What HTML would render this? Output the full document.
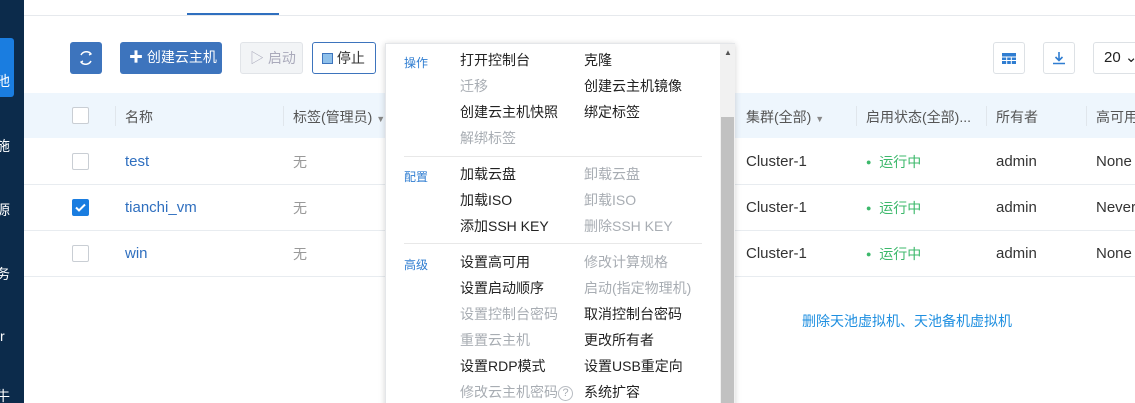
<!DOCTYPE html>
<html><head><meta charset="utf-8"><style>
*{margin:0;padding:0;box-sizing:border-box}
html,body{width:1135px;height:403px;overflow:hidden}
body{background:#fff;font-family:"Liberation Sans","Noto Sans CJK SC",sans-serif;font-size:14px;color:#333;position:relative}
.a{position:absolute;white-space:nowrap}
.side{left:0;top:0;width:24px;height:403px;background:#0c2b4b}
.side span{position:absolute;left:-4px;color:#fff;font-size:14px}
.btn{position:absolute;height:32px;border-radius:3px;line-height:30px;font-size:14px}
.hd{top:93px;left:24px;width:1111px;height:45px;background:#eef6fd}
.row{left:24px;width:1111px;height:1px;background:#e8ecf0}
.cb{position:absolute;left:72px;width:17px;height:17px;border:1px solid #c9ced4;border-radius:2px;background:#fff}
.menu{left:385px;top:43px;width:350px;height:370px;background:#fff;box-shadow:0 1px 6px rgba(0,0,0,.18);border:1px solid #e4e6e9}
.m{position:absolute;font-size:14px;color:#222}
.d{color:#a8adb3}
.g{position:absolute;left:18px;font-size:12px;color:#2f7dd1}
.sep{position:absolute;left:18px;width:298px;height:1px;background:#e8e8e8}
.rt{font-size:15px;line-height:18px}
</style></head><body>
<div class="a side">
<div style="position:absolute;left:0;top:38px;width:14px;height:59px;background:#1a7de0;border-radius:0 3px 3px 0"></div>
<span style="top:71px">池</span><span style="top:136px">施</span><span style="top:200px">源</span><span style="top:264px">务</span><span style="top:328px;left:0">r</span><span style="top:386px">牛</span>
</div>
<div class="a" style="left:24px;top:15px;width:1111px;height:1px;background:#e6e9ed"></div>
<div class="a" style="left:187px;top:13px;width:92px;height:2px;background:#2f6fbf"></div>

<div class="btn" style="left:70px;top:42px;width:32px;background:#3d74bd;text-align:center"><svg width="18" height="18" viewBox="0 0 18 18" style="margin-top:7px"><path d="M4 6A6 6 0 0 1 14 5M14 12A6 6 0 0 1 4 13" stroke="#fff" stroke-width="1.5" fill="none"/><path d="M12 3l2 2-2 1M6 15l-2-2 2-1" stroke="#fff" stroke-width="1.3" fill="none"/></svg></div>
<div class="btn" style="left:120px;top:42px;width:102px;background:#3d74bd;color:#fff;padding-left:9px">✚ 创建云主机</div>
<div class="btn" style="left:240px;top:42px;width:63px;background:#f2f4f6;border:1px solid #e1e4e8;color:#aab;padding-left:9px">▷ 启动</div>
<div class="btn" style="left:312px;top:42px;width:64px;border:1px solid #3d74bd;color:#333;padding-left:9px"><span style="display:inline-block;width:11px;height:11px;background:#8fc0ea;border:1px solid #3d74bd;vertical-align:-1px"></span> 停止</div>

<div class="btn" style="left:993px;top:42px;width:32px;border:1px solid #dde1e5;text-align:center;color:#2f7dd1">
<svg width="14" height="11" viewBox="0 0 14 11" style="margin-top:10px"><rect x="0" y="0" width="14" height="11" fill="#2f7dd1"/><path d="M0 4h14M0 7.5h14M4.7 4v7M9.3 4v7" stroke="#fff" stroke-width="1"/></svg></div>
<div class="btn" style="left:1043px;top:42px;width:32px;border:1px solid #dde1e5;text-align:center">
<svg width="14" height="14" viewBox="0 0 14 14" style="margin-top:8px"><path d="M7 1v8M3.5 6l3.5 3.5 3.5-3.5M1 12.5h12" stroke="#2f7dd1" stroke-width="1.6" fill="none"/></svg></div>
<div class="btn" style="left:1093px;top:42px;width:60px;border:1px solid #dde1e5;padding-left:10px;color:#222;font-size:15px">20 ⌄</div>

<div class="a hd"></div>
<div class="cb" style="top:107px"></div>
<div class="a" style="left:115px;top:106px;width:1px;height:20px;background:#e0e6ec"></div>
<div class="a" style="left:125px;top:107px;color:#555">名称</div>
<div class="a" style="left:283px;top:106px;width:1px;height:20px;background:#e0e6ec"></div>
<div class="a" style="left:293px;top:107px;color:#555">标签(管理员) <span style="font-size:9px;color:#888">▼</span></div>
<div class="a" style="left:746px;top:107px;color:#555">集群(全部) <span style="font-size:9px;color:#888">▼</span></div>
<div class="a" style="left:856px;top:106px;width:1px;height:20px;background:#e0e6ec"></div>
<div class="a" style="left:866px;top:107px;color:#555">启用状态(全部)...</div>
<div class="a" style="left:986px;top:106px;width:1px;height:20px;background:#e0e6ec"></div>
<div class="a" style="left:996px;top:107px;color:#555">所有者</div>
<div class="a" style="left:1086px;top:106px;width:1px;height:20px;background:#e0e6ec"></div>
<div class="a" style="left:1096px;top:107px;color:#555">高可用</div>

<div class="a row" style="top:184px"></div><div class="a row" style="top:230px"></div><div class="a row" style="top:276px"></div>
<div class="cb" style="top:153px"></div>
<div class="cb" style="top:199px;background:#1a7de0;border-color:#1a7de0"><svg width="15" height="15" viewBox="0 0 15 15"><path d="M3 7.5l3 3 6-6" stroke="#fff" stroke-width="2" fill="none"/></svg></div>
<div class="cb" style="top:245px"></div>
<div class="a rt" style="left:125px;top:153px;color:#2f6fbf">test</div>
<div class="a rt" style="left:125px;top:199px;color:#2f6fbf">tianchi_vm</div>
<div class="a rt" style="left:125px;top:245px;color:#2f6fbf">win</div>
<div class="a" style="left:293px;top:152px;color:#999">无</div>
<div class="a" style="left:293px;top:198px;color:#999">无</div>
<div class="a" style="left:293px;top:244px;color:#999">无</div>
<div class="a rt" style="left:746px;top:153px">Cluster-1</div><div class="a rt" style="left:746px;top:199px">Cluster-1</div><div class="a rt" style="left:746px;top:245px">Cluster-1</div>
<div class="a" style="left:866px;top:152px;color:#3cb86b"><span style="font-size:9px;vertical-align:2px">●</span>&nbsp;&nbsp;运行中</div>
<div class="a" style="left:866px;top:198px;color:#3cb86b"><span style="font-size:9px;vertical-align:2px">●</span>&nbsp;&nbsp;运行中</div>
<div class="a" style="left:866px;top:244px;color:#3cb86b"><span style="font-size:9px;vertical-align:2px">●</span>&nbsp;&nbsp;运行中</div>
<div class="a rt" style="left:996px;top:153px">admin</div><div class="a rt" style="left:996px;top:199px">admin</div><div class="a rt" style="left:996px;top:245px">admin</div>
<div class="a rt" style="left:1096px;top:153px">None</div><div class="a rt" style="left:1096px;top:199px">NeverStop</div><div class="a rt" style="left:1096px;top:245px">None</div>
<div class="a" style="left:802px;top:311px;color:#1f8fe0">删除天池虚拟机、天池备机虚拟机</div>

<div class="a menu">
<div style="position:absolute;left:334px;top:0;width:15px;height:370px;background:#f1f1f1"></div>
<div style="position:absolute;left:335px;top:73px;width:13px;height:300px;background:#c1c1c1"></div>
<div style="position:absolute;left:338px;top:4px;font-size:8px;color:#555">▲</div>
<div class="g" style="top:10px">操作</div><div class="g" style="top:124px">配置</div><div class="g" style="top:212px">高级</div>
<div class="sep" style="top:112px"></div><div class="sep" style="top:199px"></div>
<div class="m" style="left:74px;top:6px">打开控制台</div><div class="m" style="left:198px;top:6px">克隆</div>
<div class="m d" style="left:74px;top:32px">迁移</div><div class="m" style="left:198px;top:32px">创建云主机镜像</div>
<div class="m" style="left:74px;top:58px">创建云主机快照</div><div class="m" style="left:198px;top:58px">绑定标签</div>
<div class="m d" style="left:74px;top:84px">解绑标签</div>
<div class="m" style="left:74px;top:120px">加载云盘</div><div class="m d" style="left:198px;top:120px">卸载云盘</div>
<div class="m" style="left:74px;top:146px">加载ISO</div><div class="m d" style="left:198px;top:146px">卸载ISO</div>
<div class="m" style="left:74px;top:172px">添加SSH KEY</div><div class="m d" style="left:198px;top:172px">删除SSH KEY</div>
<div class="m" style="left:74px;top:208px">设置高可用</div><div class="m d" style="left:198px;top:208px">修改计算规格</div>
<div class="m" style="left:74px;top:234px">设置启动顺序</div><div class="m d" style="left:198px;top:234px">启动(指定物理机)</div>
<div class="m d" style="left:74px;top:260px">设置控制台密码</div><div class="m" style="left:198px;top:260px">取消控制台密码</div>
<div class="m d" style="left:74px;top:286px">重置云主机</div><div class="m" style="left:198px;top:286px">更改所有者</div>
<div class="m" style="left:74px;top:312px">设置RDP模式</div><div class="m" style="left:198px;top:312px">设置USB重定向</div>
<div class="m d" style="left:74px;top:338px">修改云主机密码<span style="display:inline-block;width:15px;height:15px;border:1px solid #b8bcc2;border-radius:50%;font-size:11px;text-align:center;line-height:13px;vertical-align:1px">?</span></div><div class="m" style="left:198px;top:338px">系统扩容</div>
</div>
</body></html>
